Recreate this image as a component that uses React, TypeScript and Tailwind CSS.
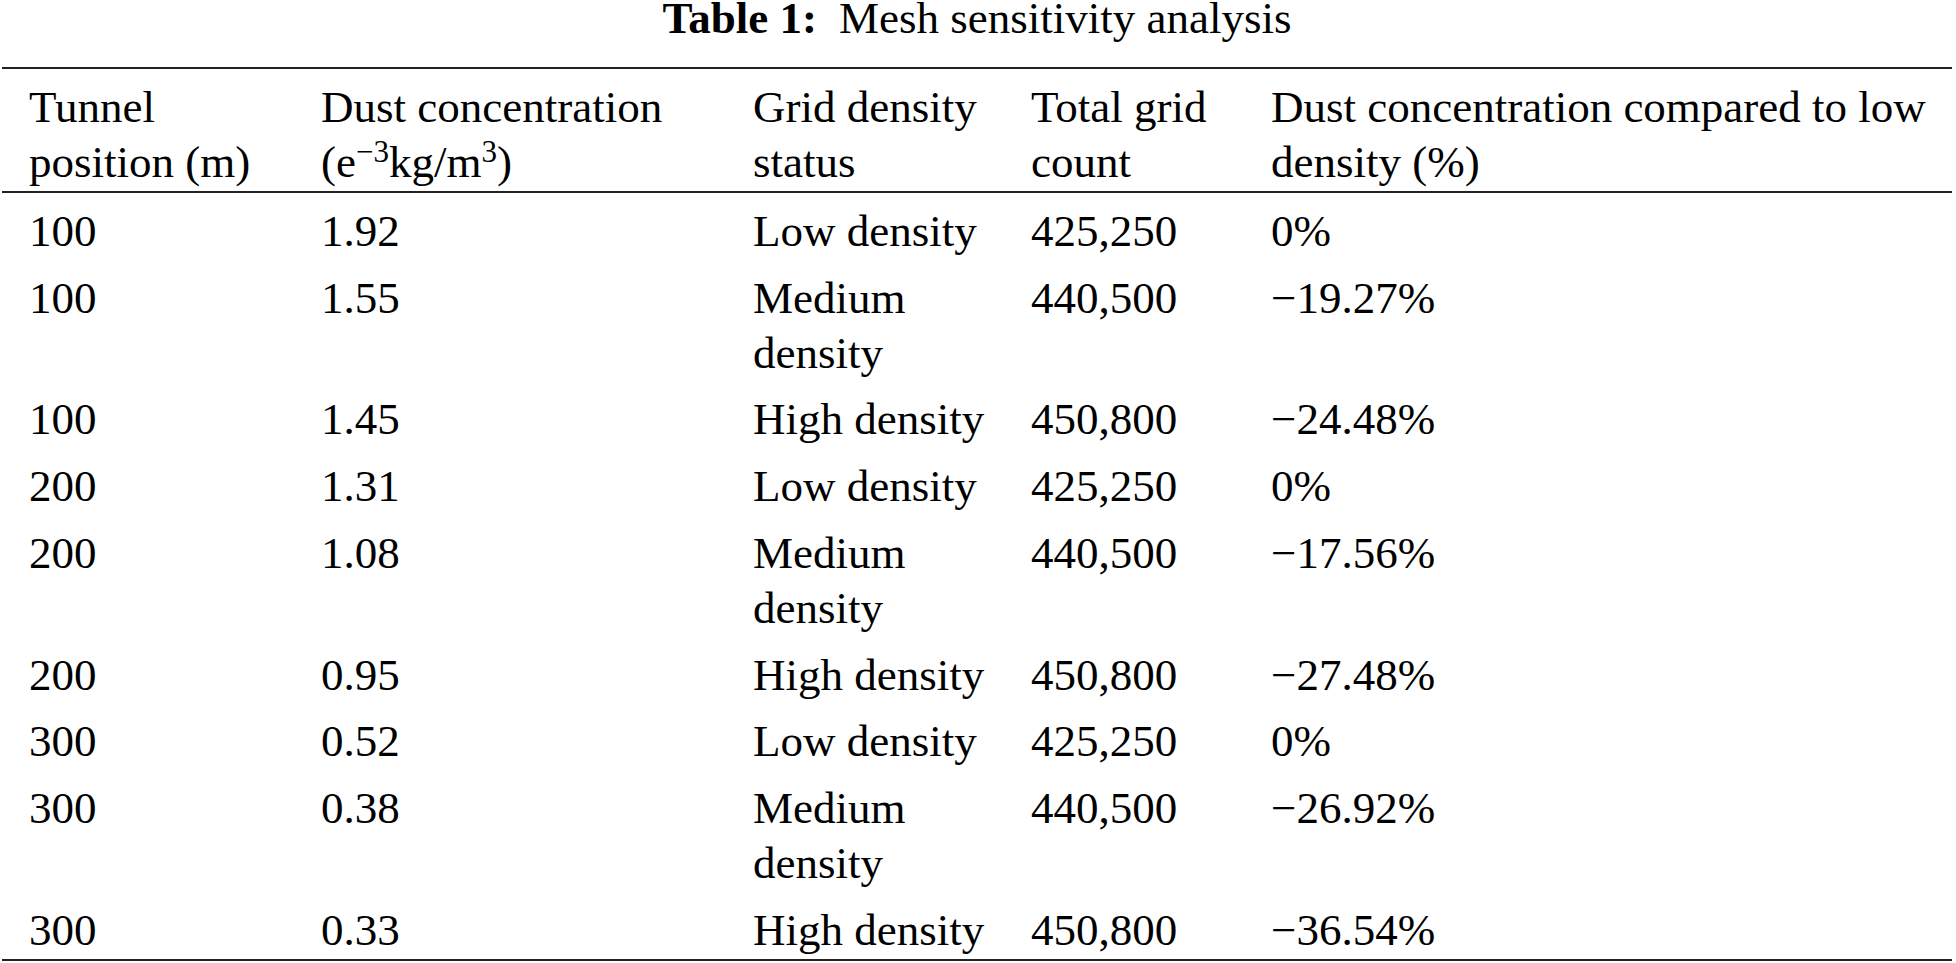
import React from 'react';

type Row = {
  pos: string;
  conc: string;
  status: string;
  count: string;
  diff: string;
};

const ROWS: Row[] = [
  { pos: '100', conc: '1.92', status: 'Low density', count: '425,250', diff: '0%' },
  { pos: '100', conc: '1.55', status: 'Medium density', count: '440,500', diff: '\u221219.27%' },
  { pos: '100', conc: '1.45', status: 'High density', count: '450,800', diff: '\u221224.48%' },
  { pos: '200', conc: '1.31', status: 'Low density', count: '425,250', diff: '0%' },
  { pos: '200', conc: '1.08', status: 'Medium density', count: '440,500', diff: '\u221217.56%' },
  { pos: '200', conc: '0.95', status: 'High density', count: '450,800', diff: '\u221227.48%' },
  { pos: '300', conc: '0.52', status: 'Low density', count: '425,250', diff: '0%' },
  { pos: '300', conc: '0.38', status: 'Medium density', count: '440,500', diff: '\u221226.92%' },
  { pos: '300', conc: '0.33', status: 'High density', count: '450,800', diff: '\u221236.54%' },
];

// shared cell styles: text hangs low in the row, like the typeset original
const cell = 'pl-[27px] pt-[11px] pb-[0.75px] align-top text-left font-normal';

export default function App() {
  return (
    <div
      className="min-h-screen bg-white text-black text-[45px] leading-[55px]"
      style={{ fontFamily: '"Liberation Serif", "Times New Roman", serif' }}
    >
      <div className="ml-[2px] w-[1950px]">
        {/* Caption */}
        <div className="text-center leading-[37px] mb-[30px]">
          <span className="font-bold">Table 1:</span>
          <span className="ml-[22px]">Mesh sensitivity analysis</span>
        </div>

        <table className="w-full border-collapse table-fixed">
          <colgroup>
            <col className="w-[292px]" />
            <col className="w-[432px]" />
            <col className="w-[278px]" />
            <col className="w-[240px]" />
            <col />
          </colgroup>
          <thead>
            <tr className="border-t-2 border-b-2 border-[#222]">
              <th className={cell}>Tunnel position (m)</th>
              <th className={cell}>
                Dust concentration (e<sup className="text-[31px] leading-none">{'\u2212'}3</sup>kg/m
                <sup className="text-[31px] leading-none">3</sup>)
              </th>
              <th className={cell}>Grid density status</th>
              <th className={cell}>Total grid count</th>
              <th className={cell}>Dust concentration compared to low density (%)</th>
            </tr>
          </thead>
          <tbody>
            {ROWS.map((r, i) => (
              <tr
                key={i}
                className={i === ROWS.length - 1 ? 'border-b-2 border-[#222]' : ''}
              >
                <td className={cell}>{r.pos}</td>
                <td className={cell}>{r.conc}</td>
                <td className={cell}>{r.status}</td>
                <td className={cell}>{r.count}</td>
                <td className={cell}>{r.diff}</td>
              </tr>
            ))}
          </tbody>
        </table>
      </div>
    </div>
  );
}
